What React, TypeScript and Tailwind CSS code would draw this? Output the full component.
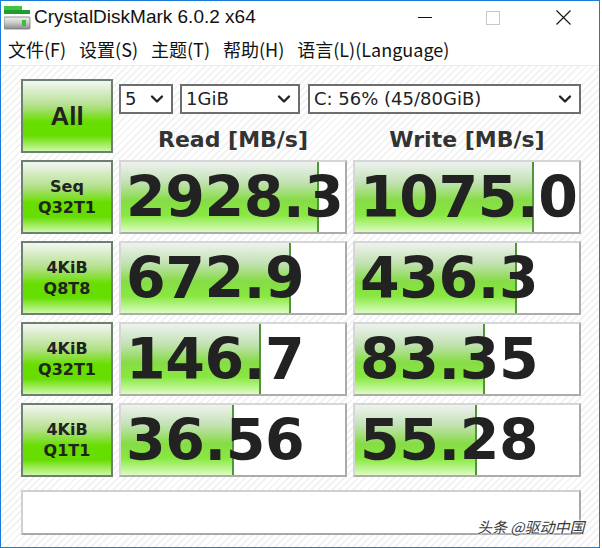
import { ChevronDown } from 'lucide-react';

interface Row {
  label: [string, string];
  read: string;
  readBar: number;
  write: string;
  writeBar: number;
}

const rows: Row[] = [
  { label: ['Seq', 'Q32T1'], read: '2928.3', readBar: 198, write: '1075.0', writeBar: 179 },
  { label: ['4KiB', 'Q8T8'], read: '672.9', readBar: 170, write: '436.3', writeBar: 162 },
  { label: ['4KiB', 'Q32T1'], read: '146.7', readBar: 140, write: '83.35', writeBar: 130 },
  { label: ['4KiB', 'Q1T1'], read: '36.56', readBar: 113, write: '55.28', writeBar: 122 },
];

const menus = ['文件(F)', '设置(S)', '主题(T)', '帮助(H)', '语言(L)(Language)'];

const greenButton =
  'flex flex-col items-center justify-center border-2 border-[#6f7f6f] bg-[linear-gradient(to_bottom,#f3f6f3_0%,#b4e08c_35%,#68de00_58%,#66dd00_78%,#cdf8a8_100%)] font-["DejaVu_Sans",sans-serif] font-bold text-[#222]';

function AppIcon() {
  return (
    <svg width="27" height="24" viewBox="0 0 27 24">
      <defs>
        <linearGradient id="drive" x1="0" y1="0" x2="0" y2="1">
          <stop offset="0" stopColor="#f2f2f2" />
          <stop offset="0.5" stopColor="#c8c8c8" />
          <stop offset="1" stopColor="#8a8a8a" />
        </linearGradient>
      </defs>
      <rect x="0" y="0" width="18" height="4" fill="#3fc63f" />
      <rect x="0" y="4" width="26" height="4" fill="#1e9e2e" />
      <rect x="0" y="11" width="26" height="12" rx="1" fill="url(#drive)" stroke="#777" strokeWidth="0.8" />
      <rect x="18" y="14" width="4" height="6" fill="#38c038" />
    </svg>
  );
}

function Select({ width, text }: { width: string; text: string }) {
  return (
    <div className={`flex h-[30px] items-center justify-between border-2 border-[#6e6e6e] bg-white pl-[4px] pr-[4px] ${width}`}>
      <span className="font-['DejaVu_Sans',sans-serif] text-[18px] leading-none text-[#222]">{text}</span>
      <ChevronDown className="h-[20px] w-[20px] text-[#222]" strokeWidth={2.8} />
    </div>
  );
}

function ResultCell({ value, bar }: { value: string; bar: number }) {
  return (
    <div className="relative flex h-[74px] items-center overflow-hidden border-2 border-t-[#d6d6d6] border-l-[#d6d6d6] border-b-[#ababab] border-r-[#ababab] bg-white">
      <div
        className="absolute inset-y-0 left-0 border-r-2 border-r-[#4f9638] bg-[linear-gradient(to_bottom,#eef2ee_0%,#c4e2b6_28%,#86dc46_55%,#88e840_76%,#dcfcc2_100%)]"
        style={{ width: bar }}
      />
      <span className="relative whitespace-nowrap pl-[5px] font-['DejaVu_Sans',sans-serif] text-[57px] font-bold leading-none tracking-[-0.4px] text-[#222]">
        {value}
      </span>
    </div>
  );
}

export default function App() {
  return (
    <div className="relative h-[548px] w-[602px] bg-white">
      <div className="flex h-[548px] w-[600px] flex-col border border-[#1c7bd6] bg-white">
        {/* title bar */}
        <div className="flex h-[33px] items-center">
          <div className="ml-[3px] mt-[1px]">
            <AppIcon />
          </div>
          <span className="ml-[3px] font-['Liberation_Sans',sans-serif] text-[19px] text-[#111]">
            CrystalDiskMark 6.0.2 x64
          </span>
          <div className="ml-auto flex h-full items-center">
            <div className="flex w-[68px] justify-center">
              <div className="h-[1px] w-[14px] bg-[#111]" />
            </div>
            <div className="flex w-[68px] justify-center">
              <div className="h-[14px] w-[14px] border border-[#c8c8c8]" />
            </div>
            <div className="flex w-[72px] justify-center">
              <svg width="15" height="15" viewBox="0 0 15 15">
                <path d="M0.5 0.5L14.5 14.5M14.5 0.5L0.5 14.5" stroke="#111" strokeWidth="1.1" />
              </svg>
            </div>
          </div>
        </div>

        {/* menu bar */}
        <div className="flex h-[31px] items-center gap-[13px] pl-[7px] font-['Noto_Sans_CJK_SC','Noto_Sans',sans-serif] text-[18px] text-[#111]">
          {menus.map((m) => (
            <span key={m}>{m}</span>
          ))}
        </div>

        {/* content */}
        <div className="flex flex-1 flex-col border-t border-t-[#ececec] bg-[repeating-linear-gradient(135deg,#ffffff_0px,#ffffff_3px,#f3f3f3_3px,#f3f3f3_5px)] pl-[20px] pt-[13px]">
          <div className="grid w-[560px] grid-cols-[92px_228px_228px] gap-x-[6px] gap-y-[7px]">
            <div className={`h-[74px] ${greenButton}`}>
              <span className="font-['Liberation_Sans',sans-serif] text-[26px]">All</span>
            </div>
            <div className="col-span-2 flex flex-col">
              <div className="mt-[5px] flex gap-[7px]">
                <Select width="w-[54px]" text="5" />
                <Select width="w-[120px]" text="1GiB" />
                <div className="ml-[1px]">
                  <Select width="w-[273px]" text="C: 56% (45/80GiB)" />
                </div>
              </div>
              <div className="mt-[13px] grid grid-cols-2 gap-x-[6px] font-['DejaVu_Sans',sans-serif] text-[22px] font-bold leading-[26px] text-[#333]">
                <span className="text-center">Read [MB/s]</span>
                <span className="text-center">Write [MB/s]</span>
              </div>
            </div>

            {rows.map((row) => (
              <div key={row.label.join('-') + row.read} className="contents">
                <div className={`h-[74px] text-[16px] leading-[21px] ${greenButton}`}>
                  <span>{row.label[0]}</span>
                  <span>{row.label[1]}</span>
                </div>
                <ResultCell value={row.read} bar={row.readBar} />
                <ResultCell value={row.write} bar={row.writeBar} />
              </div>
            ))}
          </div>

          <div className="mt-[13px] h-[45px] w-[560px] border-2 border-t-[#d0d0d0] border-l-[#d0d0d0] border-b-[#a8a8a8] border-r-[#a8a8a8] bg-white" />
        </div>
      </div>

      <span className="absolute left-[477px] top-[516px] font-['Noto_Sans_CJK_SC',sans-serif] text-[15px] italic text-[#3a3a3a] [text-shadow:0_0_2px_#fff,0_0_2px_#fff,0_0_3px_#fff]">
        头条 @驱动中国
      </span>
    </div>
  );
}
